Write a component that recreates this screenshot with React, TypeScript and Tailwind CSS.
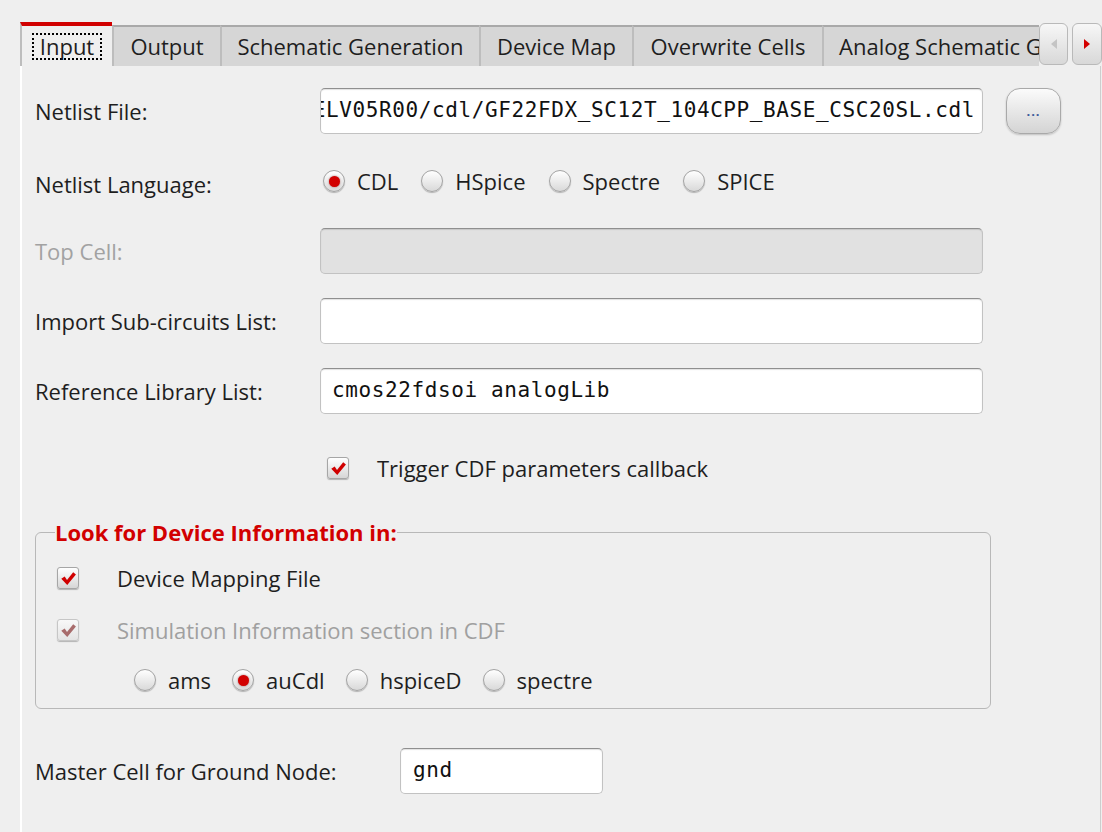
import React from "react";

const mono = "font-['DejaVu_Sans_Mono',monospace] text-[21px] tracking-[0.6px] text-[#111]";

function Radio({ checked = false }: { checked?: boolean }) {
    return (
        <span className="flex h-[22px] w-[22px] shrink-0 items-center justify-center rounded-full border border-[#a3a3a3] bg-linear-to-b from-white to-[#d9d9d9] shadow-[0_1px_1px_rgba(0,0,0,0.25)]">
            {checked && <span className="h-[11px] w-[11px] rounded-full bg-[#d20000] shadow-[0_0_2px_rgba(120,0,0,0.6)]" />}
        </span>
    );
}

function Check({ disabled = false }: { disabled?: boolean }) {
    return (
        <span
            className={`flex h-[22px] w-[22px] shrink-0 items-center justify-center rounded-[3px] border shadow-[0_1px_1px_rgba(0,0,0,0.25)] ${disabled
                ? "border-[#c6c6c6] bg-linear-to-b from-[#f8f8f8] to-[#e4e4e4]"
                : "border-[#a6a6a6] bg-linear-to-b from-white to-[#d6d6d6]"
                }`}
        >
            <svg width="17" height="17" viewBox="0 0 16 16">
                <path
                    d="M1.2 8.2 L4.4 6.2 L6.6 9.4 L12.4 2.2 L15 4.2 L6.8 14.2 Z"
                    fill={disabled ? "#a86c6c" : "#d00000"}
                />
            </svg>
        </span>
    );
}

function Field({ children, disabled = false, className = "" }: { children?: React.ReactNode; disabled?: boolean; className?: string }) {
    return (
        <div
            className={`flex h-[46px] items-center overflow-hidden rounded-[5px] border border-[#c2c2c2] border-t-[#8f8f8f] shadow-[inset_0_1px_1px_rgba(0,0,0,0.12)] ${disabled ? "bg-[#e1e1e1]" : "bg-white"
                } ${className}`}
        >
            {children}
        </div>
    );
}

function RadioItem({ label, checked = false }: { label: string; checked?: boolean }) {
    return (
        <div className="flex items-center gap-[12px]">
            <Radio checked={checked} />
            <span>{label}</span>
        </div>
    );
}

const tabs = ["Output", "Schematic Generation", "Device Map", "Overwrite Cells"];
const tabWidths = ["w-[108px]", "w-[259px]", "w-[153px]", "w-[190px]"];

export default function App() {
    return (
        <div className="flex h-[832px] w-[1102px] flex-col overflow-hidden bg-[#efefef] font-['Open_Sans',sans-serif] text-[22px] text-[#1e1e1e]">
            {/* Tab bar */}
            <div className="ml-[20px] mt-[22px] flex h-[44px] items-end">
                <div className="flex w-[1021px] items-end overflow-hidden">
                    <div className="flex h-[44px] w-[92px] shrink-0 items-center justify-center border-l-2 border-t-4 border-l-[#bdbdbd] border-t-[#d10000] bg-[#efefef]">
                        <span className="border-2 border-dotted border-black px-[6px] leading-[23px]">Input</span>
                    </div>
                    {tabs.map((t, i) => (
                        <div
                            key={t}
                            className={`flex h-[41px] shrink-0 items-center justify-center whitespace-nowrap border-l-2 border-t-2 border-l-[#bdbdbd] border-t-[#a9a9a9] bg-[#d6d6d6] ${tabWidths[i]}`}
                        >
                            {t}
                        </div>
                    ))}
                    <div className="flex h-[41px] w-[240px] shrink-0 items-center whitespace-nowrap border-l-2 border-t-2 border-l-[#bdbdbd] border-t-[#a9a9a9] bg-[#d6d6d6] pl-[15px]">
                        Analog Schematic Generation
                    </div>
                </div>
                <div className="mb-[1px] flex h-[42px] w-[29px] shrink-0 items-center justify-center rounded-[6px] border border-[#b9b9b9] bg-linear-to-b from-[#f7f7f7] to-[#d8d8d8]">
                    <svg width="8" height="12" viewBox="0 0 8 12"><path d="M7 1 L1 6 L7 11 Z" fill="#c4c4c4" /></svg>
                </div>
                <div className="mb-[1px] ml-[4px] flex h-[42px] w-[30px] shrink-0 items-center justify-center rounded-[6px] border border-[#b9b9b9] bg-linear-to-b from-[#f7f7f7] to-[#d8d8d8]">
                    <svg width="8" height="12" viewBox="0 0 8 12"><path d="M1 1 L7 6 L1 11 Z" fill="#d40000" /></svg>
                </div>
            </div>

            {/* Tab pane */}
            <div className="ml-[20px] flex w-[1081px] flex-1 flex-col border-l-2 border-r border-l-white border-r-[#cdcdcd] pl-[13px]">
                {/* Netlist File */}
                <div className="mt-[22px] flex h-[46px] items-center">
                    <div className="w-[285px]">Netlist File:</div>
                    <Field className="w-[663px] justify-end pr-[7px]">
                        <span className={`whitespace-nowrap ${mono}`}>/opt/pdk/GF22FDX_SC12T_104CPP_BASE_CSC20SL_FDK_RELV05R00/cdl/GF22FDX_SC12T_104CPP_BASE_CSC20SL.cdl</span>
                    </Field>
                    <div className="ml-[23px] flex h-[46px] w-[55px] items-center justify-center rounded-[14px] border border-[#a9a9a9] bg-linear-to-b from-[#fbfbfb] to-[#d4d4d4] shadow-[0_1px_2px_rgba(0,0,0,0.2)]">
                        <span className="text-[13px] font-bold leading-none tracking-[1px] text-[#3d5b9a]">...</span>
                    </div>
                </div>

                {/* Netlist Language */}
                <div className="mt-[24px] flex h-[46px] items-center">
                    <div className="w-[285px] pt-[6px]">Netlist Language:</div>
                    <div className="ml-[3px] flex items-center gap-[23px]">
                        <RadioItem label="CDL" checked />
                        <RadioItem label="HSpice" />
                        <RadioItem label="Spectre" />
                        <RadioItem label="SPICE" />
                    </div>
                </div>

                {/* Top Cell */}
                <div className="mt-[24px] flex h-[46px] items-center">
                    <div className="w-[285px] text-[#a2a2a2]">Top Cell:</div>
                    <Field disabled className="w-[663px]" />
                </div>

                {/* Import Sub-circuits */}
                <div className="mt-[24px] flex h-[46px] items-center">
                    <div className="w-[285px]">Import Sub-circuits List:</div>
                    <Field className="w-[663px]" />
                </div>

                {/* Reference Library */}
                <div className="mt-[24px] flex h-[46px] items-center">
                    <div className="w-[285px]">Reference Library List:</div>
                    <Field className="w-[663px] pl-[11px]">
                        <span className={mono}>cmos22fdsoi analogLib</span>
                    </Field>
                </div>

                {/* Trigger CDF */}
                <div className="mt-[39px] flex h-[30px] items-center pl-[292px]">
                    <Check />
                    <span className="ml-[28px]">Trigger CDF parameters callback</span>
                </div>

                {/* Device info group */}
                <fieldset className="mt-[34px] w-[956px] rounded-[6px] border border-[#b8b8b8] pb-[13px] pl-[19px]">
                    <legend className="font-bold leading-[30px] text-[#d20000]">Look for Device Information in:</legend>
                    <div className="mt-[16px] flex h-[30px] items-center pl-[2px]">
                        <Check />
                        <span className="ml-[38px]">Device Mapping File</span>
                    </div>
                    <div className="mt-[22px] flex h-[30px] items-center pl-[2px]">
                        <Check disabled />
                        <span className="ml-[38px] text-[#a0a0a0]">Simulation Information section in CDF</span>
                    </div>
                    <div className="mt-[20px] flex h-[30px] items-center gap-[21px] pl-[79px]">
                        <RadioItem label="ams" />
                        <RadioItem label="auCdl" checked />
                        <RadioItem label="hspiceD" />
                        <RadioItem label="spectre" />
                    </div>
                </fieldset>

                {/* Master Cell */}
                <div className="mt-[39px] flex h-[46px] items-center">
                    <div className="w-[365px]">Master Cell for Ground Node:</div>
                    <Field className="w-[203px] pl-[12px]">
                        <span className={mono}>gnd</span>
                    </Field>
                </div>
            </div>
        </div>
    );
}
